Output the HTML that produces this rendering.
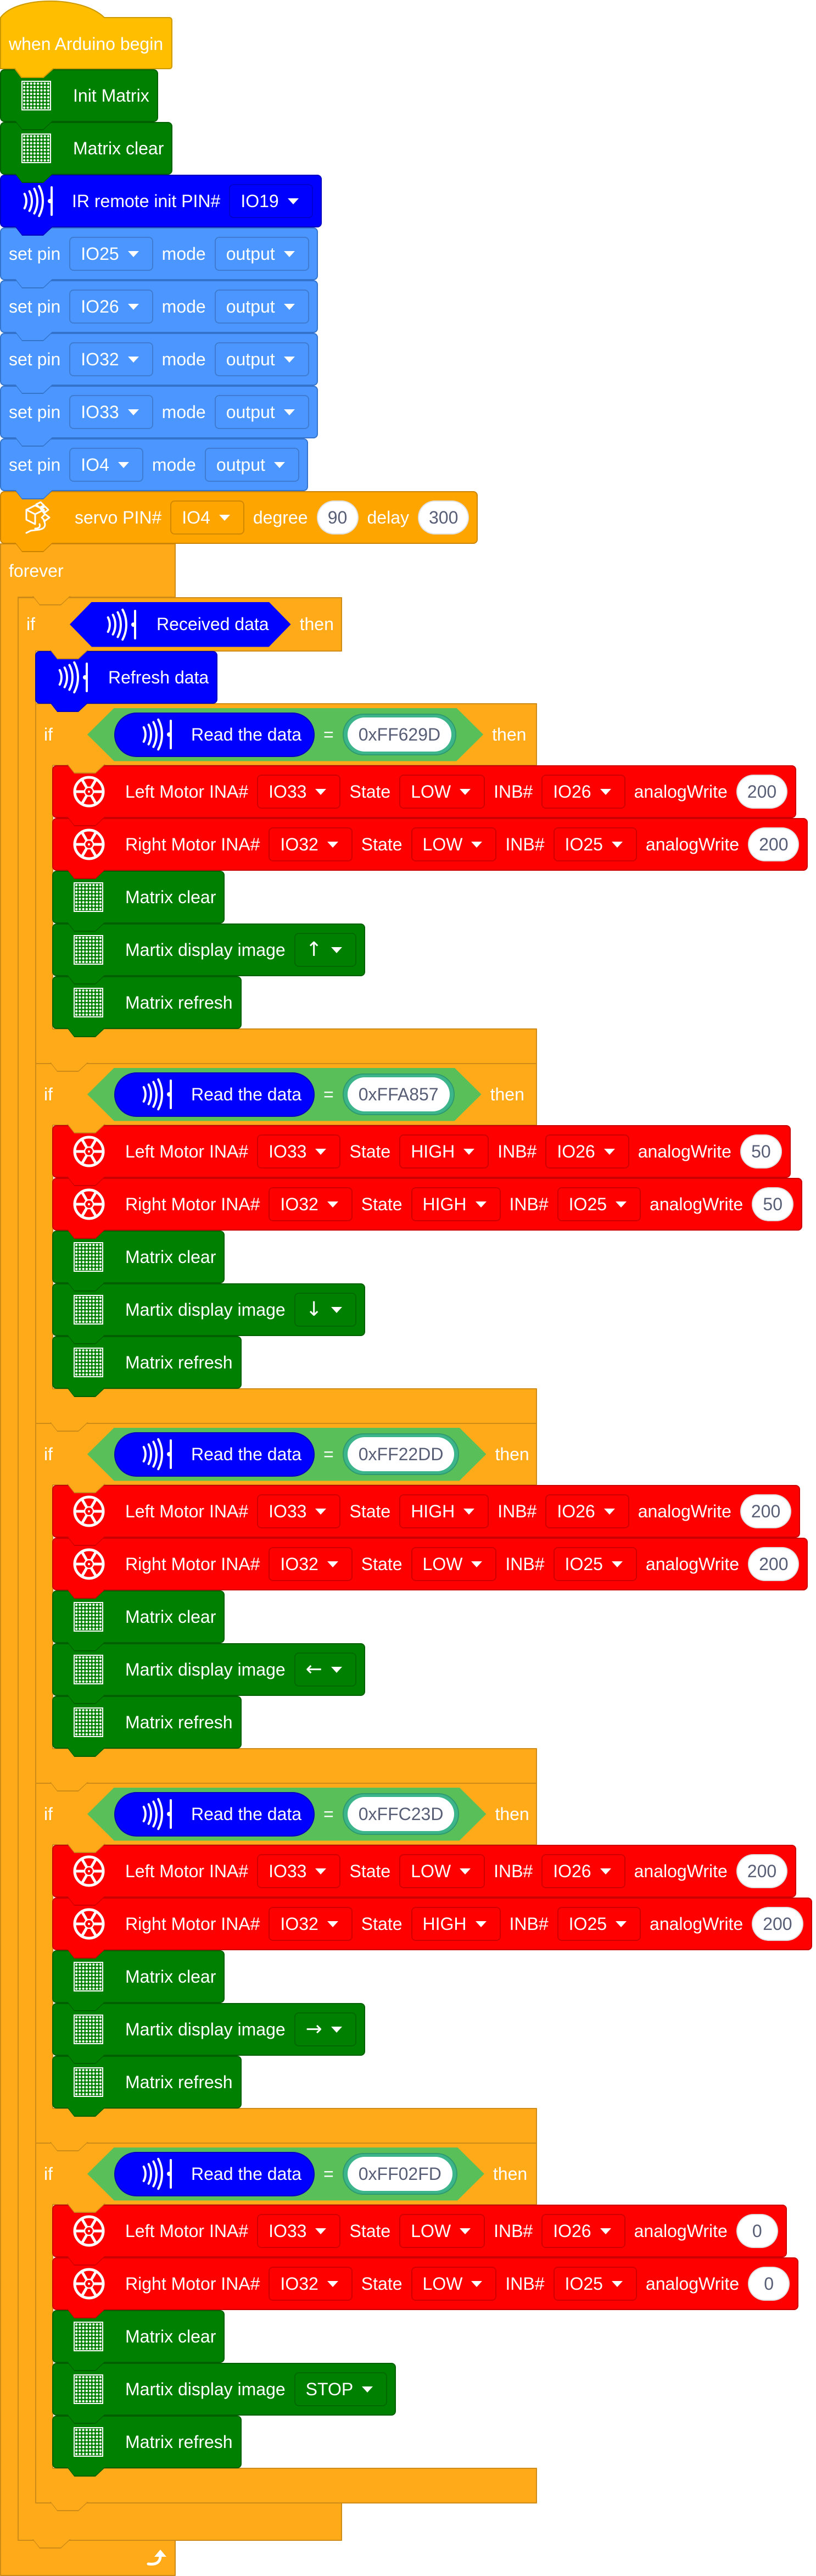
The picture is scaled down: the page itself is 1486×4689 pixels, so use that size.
<!DOCTYPE html>
<html><head><meta charset="utf-8">
<style>
html,body{margin:0;padding:0;background:#fff;}
body{width:1486px;height:4689px;position:relative;overflow:hidden;font-family:"Liberation Sans",Arial,"DejaVu Sans",sans-serif;}
.b{position:absolute;display:flex;align-items:center;gap:16px;height:96px;box-sizing:border-box;border:2px solid var(--d);background:var(--c);border-radius:8px;padding:0 14px;color:#fff;font-size:32px;white-space:nowrap;}
.t::before,.t::after{content:"";position:absolute;left:25px;width:70px;height:17px;clip-path:polygon(0 0,100% 0,74% 100%,19% 100%);z-index:5;}
.t::before{top:100%;background:var(--d);}
.t::after{top:calc(100% - 2px);background:var(--c);}
.g{--c:#008000;--d:#006000;}
.bl{--c:#0000FF;--d:#0000C0;}
.sp{--c:#4C97FF;--d:#3373CC;}
.rd{--c:#FF0000;--d:#CC0000;}
.sv{--c:#FFA500;--d:#CC8400;}
.dd{height:62px;box-sizing:border-box;border:2px solid rgba(0,0,0,.18);border-radius:8px;display:flex;align-items:center;padding:0 24px 0 19px;gap:16px;}
.ar{width:0;height:0;border-left:10px solid transparent;border-right:10px solid transparent;border-top:11px solid #fff;}
.ag{font-family:"DejaVu Sans",sans-serif;font-size:36px;line-height:1;}
.p{height:62px;min-width:76px;box-sizing:border-box;padding:0 18px;border-radius:31px;background:#fff;color:#575E75;display:flex;align-items:center;justify-content:center;border:2px solid rgba(0,0,0,.12);}
.mx{width:50px;height:50px;border:2px solid #fff;background:radial-gradient(circle,#fff 1.9px,transparent 2.4px) 0 0/6.25px 6.25px;flex:none;}
.mi{padding-left:37px;}
.mi .mx+span{margin-left:24px;}
.hd{position:absolute;display:flex;align-items:center;gap:16px;color:#fff;font-size:32px;white-space:nowrap;box-sizing:border-box;padding-left:16px;}
.hx{display:flex;align-items:center;gap:16px;height:97px;padding:0 49px;background:#59C059;margin-left:47px;clip-path:polygon(49px 0,calc(100% - 49px) 0,100% 50%,calc(100% - 49px) 100%,49px 100%,0 50%);}
.rp{height:81px;box-sizing:border-box;border-radius:41px;background:#0000FF;border:2px solid #0000C0;display:flex;align-items:center;padding:0 22px 0 40px;}
.rp span{margin-left:33px;}
.vr{padding:5px 7px;border-radius:40px;background:#3DB58A;border:2px solid #2E9A6F;}
.vi{height:62px;border-radius:31px;background:#fff;color:#575E75;padding:0 20px;display:flex;align-items:center;}
.hx2{display:flex;align-items:center;height:82px;padding:0 40px 0 58px;background:#0000FF;margin-left:47px;clip-path:polygon(40px 0,calc(100% - 40px) 0,100% 50%,calc(100% - 40px) 100%,40px 100%,0 50%);}
.hx2 span{margin-left:35px;}
.ot{position:absolute;width:70px;height:17px;background:#CF8B17;clip-path:polygon(0 0,100% 0,74% 100%,19% 100%);z-index:6;}
.ot::after{content:"";position:absolute;left:0;top:-2px;width:70px;height:17px;background:#FFAB19;clip-path:polygon(0 0,100% 0,74% 100%,19% 100%);}
.mt{padding-left:35px;}
.mt svg{flex:none;}
.mt svg+span{margin-left:20px;}
</style></head><body>

<svg width="0" height="0" style="position:absolute">
<defs>
<symbol id="ir" viewBox="0 0 65 62"><g fill="none" stroke="#fff" stroke-width="4" stroke-linecap="round">
<path d="M11.7,17.9 A28,28 0 0 1 11.7,44.1"/><path d="M20.6,13.2 A38,38 0 0 1 20.6,48.8"/><path d="M29.4,8.5 A48,48 0 0 1 29.4,53.5"/><path d="M38.2,3.8 A58,58 0 0 1 38.2,58.2"/><path d="M61,6 V56"/></g><circle cx="58" cy="31" r="4" fill="#fff"/></symbol>
<symbol id="wh" viewBox="0 0 60 60"><g fill="none" stroke="#fff"><circle cx="30" cy="30" r="26" stroke-width="5"/><circle cx="30" cy="30" r="8" stroke-width="2.5"/>
<path d="M38,30H56M4,30H22M34,23.1L43,7.5M26,36.9L17,52.5M26,23.1L17,7.5M34,36.9L43,52.5" stroke-width="5"/></g><circle cx="30" cy="30" r="2" fill="#fff"/></symbol>
</defs></svg>

<svg width="1486" height="4689" style="position:absolute;left:0;top:0" >
<g stroke="#CF8B17" stroke-width="2" stroke-linejoin="round" fill="#FFAB19">
<path d="M1,990 H319 V1087 H33 V4624 H319 V4688 H1 Z"/>
<path d="M33,1088 H622 V1185 H65 V4556 H622 V4624 H33 Z"/>
<path d="M65,1281 H977 V1393 H96 V1873 H977 V1936 H65 Z"/>
<path d="M65,1936 H977 V2048 H96 V2528 H977 V2591 H65 Z"/>
<path d="M65,2591 H977 V2703 H96 V3183 H977 V3246 H65 Z"/>
<path d="M65,3246 H977 V3358 H96 V3838 H977 V3901 H65 Z"/>
<path d="M65,3901 H977 V4013 H96 V4493 H977 V4556 H65 Z"/>
</g>
<g fill="none" stroke="#fff" stroke-width="5" stroke-linecap="round"><path d="M270,4667 Q292,4670 292,4652"/></g>
<path d="M281,4654 L292,4641 L303,4654 Z" fill="#fff"/>
<text x="16" y="1050" fill="#fff" font-size="32" font-family="Liberation Sans, Arial, sans-serif">forever</text>
</svg>

<svg width="330" height="150" style="position:absolute;left:0;top:0;z-index:6">
<path d="M1,125 L1,32 C30,-8 150,-8 190,32 L308,32 Q313,32 313,38 L313,120 Q313,125 308,125 L97,125 L79,141 L39,141 L27,125 Z" fill="#FFBF00" stroke="#CC9900" stroke-width="2"/>
<text x="16" y="91" fill="#fff" font-size="32" font-family="Liberation Sans, Arial, sans-serif">when Arduino begin</text>
</svg>

<div class="b g t mi" style="left:0;top:126px"><div class="mx"></div><span>Init Matrix</span></div>
<div class="b g t mi" style="left:0;top:222px"><div class="mx"></div><span>Matrix clear</span></div>
<div class="b bl t" style="left:0;top:318px;padding-left:31px"><svg width="65" height="62"><use href="#ir"/></svg><span style="margin-left:17px">IR remote init PIN#</span><div class="dd">IO19<i class="ar"></i></div></div>
<div class="b sp t" style="left:0;top:414px"><span>set pin</span><div class="dd">IO25<i class="ar"></i></div><span>mode</span><div class="dd">output<i class="ar"></i></div></div>
<div class="b sp t" style="left:0;top:510px"><span>set pin</span><div class="dd">IO26<i class="ar"></i></div><span>mode</span><div class="dd">output<i class="ar"></i></div></div>
<div class="b sp t" style="left:0;top:606px"><span>set pin</span><div class="dd">IO32<i class="ar"></i></div><span>mode</span><div class="dd">output<i class="ar"></i></div></div>
<div class="b sp t" style="left:0;top:702px"><span>set pin</span><div class="dd">IO33<i class="ar"></i></div><span>mode</span><div class="dd">output<i class="ar"></i></div></div>
<div class="b sp t" style="left:0;top:798px"><span>set pin</span><div class="dd">IO4<i class="ar"></i></div><span>mode</span><div class="dd">output<i class="ar"></i></div></div>
<div class="b sv t" style="left:0;top:894px;padding-left:42px"><svg width="48" height="60" viewBox="0 0 48 60"><g fill="none" stroke="#fff" stroke-width="3" stroke-linejoin="round" stroke-linecap="round"><path d="M4,16 L20,8 L36,16 L20,24 Z"/><path d="M4,16 V34 L20,42 V24"/><path d="M36,16 V22"/><path d="M22,6 L30,2 L36,8 L28,12 Z"/><path d="M30,14 L38,10 L44,16 L36,22 Z"/><path d="M38,24 L46,30 L38,36 L32,30 Z"/><path d="M36,36 C40,44 38,50 28,52 L12,54 L4,58"/><path d="M28,42 C30,48 26,50 20,50"/></g></svg><span style="margin-left:28px">servo PIN#</span><div class="dd">IO4<i class="ar"></i></div><span>degree</span><div class="p">90</div><span>delay</span><div class="p">300</div></div>

<div class="ot" style="left:59px;top:1085px"></div>
<div class="hd" style="left:32px;top:1088px;height:97px"><span>if</span><div class="hx2"><svg width="65" height="62"><use href="#ir"/></svg><span>Received data</span></div><span>then</span></div>
<div class="ot" style="left:91px;top:1183px"></div>
<div class="b bl t" style="left:64px;top:1185px;height:96px;padding-left:31px"><svg width="65" height="62"><use href="#ir"/></svg><span style="margin-left:19px">Refresh data</span></div>

<div class="hd" style="left:64px;top:1281px;height:112px"><span>if</span><div class="hx"><div class="rp"><svg width="65" height="62"><use href="#ir"/></svg><span>Read the data</span></div><span>=</span><div class="vr"><div class="vi">0xFF629D</div></div></div><span>then</span></div>
<div class="ot" style="left:122px;top:1391px"></div>
<div class="b rd t mt" style="left:95px;top:1393px"><svg width="60" height="60"><use href="#wh"/></svg><span>Left Motor INA#</span><div class="dd">IO33<i class="ar"></i></div><span>State</span><div class="dd">LOW<i class="ar"></i></div><span>INB#</span><div class="dd">IO26<i class="ar"></i></div><span>analogWrite</span><div class="p">200</div></div>
<div class="b rd t mt" style="left:95px;top:1489px"><svg width="60" height="60"><use href="#wh"/></svg><span>Right Motor INA#</span><div class="dd">IO32<i class="ar"></i></div><span>State</span><div class="dd">LOW<i class="ar"></i></div><span>INB#</span><div class="dd">IO25<i class="ar"></i></div><span>analogWrite</span><div class="p">200</div></div>
<div class="b g t mi" style="left:95px;top:1585px"><div class="mx"></div><span>Matrix clear</span></div>
<div class="b g t mi" style="left:95px;top:1681px"><div class="mx"></div><span>Martix display image</span><div class="dd"><span class="ag">↑</span><i class="ar"></i></div></div>
<div class="b g t mi" style="left:95px;top:1777px"><div class="mx"></div><span>Matrix refresh</span></div>
<div class="ot" style="left:91px;top:1934px"></div>

<div class="hd" style="left:64px;top:1936px;height:112px"><span>if</span><div class="hx"><div class="rp"><svg width="65" height="62"><use href="#ir"/></svg><span>Read the data</span></div><span>=</span><div class="vr"><div class="vi">0xFFA857</div></div></div><span>then</span></div>
<div class="ot" style="left:122px;top:2046px"></div>
<div class="b rd t mt" style="left:95px;top:2048px"><svg width="60" height="60"><use href="#wh"/></svg><span>Left Motor INA#</span><div class="dd">IO33<i class="ar"></i></div><span>State</span><div class="dd">HIGH<i class="ar"></i></div><span>INB#</span><div class="dd">IO26<i class="ar"></i></div><span>analogWrite</span><div class="p">50</div></div>
<div class="b rd t mt" style="left:95px;top:2144px"><svg width="60" height="60"><use href="#wh"/></svg><span>Right Motor INA#</span><div class="dd">IO32<i class="ar"></i></div><span>State</span><div class="dd">HIGH<i class="ar"></i></div><span>INB#</span><div class="dd">IO25<i class="ar"></i></div><span>analogWrite</span><div class="p">50</div></div>
<div class="b g t mi" style="left:95px;top:2240px"><div class="mx"></div><span>Matrix clear</span></div>
<div class="b g t mi" style="left:95px;top:2336px"><div class="mx"></div><span>Martix display image</span><div class="dd"><span class="ag">↓</span><i class="ar"></i></div></div>
<div class="b g t mi" style="left:95px;top:2432px"><div class="mx"></div><span>Matrix refresh</span></div>
<div class="ot" style="left:91px;top:2589px"></div>

<div class="hd" style="left:64px;top:2591px;height:112px"><span>if</span><div class="hx"><div class="rp"><svg width="65" height="62"><use href="#ir"/></svg><span>Read the data</span></div><span>=</span><div class="vr"><div class="vi">0xFF22DD</div></div></div><span>then</span></div>
<div class="ot" style="left:122px;top:2701px"></div>
<div class="b rd t mt" style="left:95px;top:2703px"><svg width="60" height="60"><use href="#wh"/></svg><span>Left Motor INA#</span><div class="dd">IO33<i class="ar"></i></div><span>State</span><div class="dd">HIGH<i class="ar"></i></div><span>INB#</span><div class="dd">IO26<i class="ar"></i></div><span>analogWrite</span><div class="p">200</div></div>
<div class="b rd t mt" style="left:95px;top:2799px"><svg width="60" height="60"><use href="#wh"/></svg><span>Right Motor INA#</span><div class="dd">IO32<i class="ar"></i></div><span>State</span><div class="dd">LOW<i class="ar"></i></div><span>INB#</span><div class="dd">IO25<i class="ar"></i></div><span>analogWrite</span><div class="p">200</div></div>
<div class="b g t mi" style="left:95px;top:2895px"><div class="mx"></div><span>Matrix clear</span></div>
<div class="b g t mi" style="left:95px;top:2991px"><div class="mx"></div><span>Martix display image</span><div class="dd"><span class="ag">←</span><i class="ar"></i></div></div>
<div class="b g t mi" style="left:95px;top:3087px"><div class="mx"></div><span>Matrix refresh</span></div>
<div class="ot" style="left:91px;top:3244px"></div>

<div class="hd" style="left:64px;top:3246px;height:112px"><span>if</span><div class="hx"><div class="rp"><svg width="65" height="62"><use href="#ir"/></svg><span>Read the data</span></div><span>=</span><div class="vr"><div class="vi">0xFFC23D</div></div></div><span>then</span></div>
<div class="ot" style="left:122px;top:3356px"></div>
<div class="b rd t mt" style="left:95px;top:3358px"><svg width="60" height="60"><use href="#wh"/></svg><span>Left Motor INA#</span><div class="dd">IO33<i class="ar"></i></div><span>State</span><div class="dd">LOW<i class="ar"></i></div><span>INB#</span><div class="dd">IO26<i class="ar"></i></div><span>analogWrite</span><div class="p">200</div></div>
<div class="b rd t mt" style="left:95px;top:3454px"><svg width="60" height="60"><use href="#wh"/></svg><span>Right Motor INA#</span><div class="dd">IO32<i class="ar"></i></div><span>State</span><div class="dd">HIGH<i class="ar"></i></div><span>INB#</span><div class="dd">IO25<i class="ar"></i></div><span>analogWrite</span><div class="p">200</div></div>
<div class="b g t mi" style="left:95px;top:3550px"><div class="mx"></div><span>Matrix clear</span></div>
<div class="b g t mi" style="left:95px;top:3646px"><div class="mx"></div><span>Martix display image</span><div class="dd"><span class="ag">→</span><i class="ar"></i></div></div>
<div class="b g t mi" style="left:95px;top:3742px"><div class="mx"></div><span>Matrix refresh</span></div>
<div class="ot" style="left:91px;top:3899px"></div>

<div class="hd" style="left:64px;top:3901px;height:112px"><span>if</span><div class="hx"><div class="rp"><svg width="65" height="62"><use href="#ir"/></svg><span>Read the data</span></div><span>=</span><div class="vr"><div class="vi">0xFF02FD</div></div></div><span>then</span></div>
<div class="ot" style="left:122px;top:4011px"></div>
<div class="b rd t mt" style="left:95px;top:4013px"><svg width="60" height="60"><use href="#wh"/></svg><span>Left Motor INA#</span><div class="dd">IO33<i class="ar"></i></div><span>State</span><div class="dd">LOW<i class="ar"></i></div><span>INB#</span><div class="dd">IO26<i class="ar"></i></div><span>analogWrite</span><div class="p">0</div></div>
<div class="b rd t mt" style="left:95px;top:4109px"><svg width="60" height="60"><use href="#wh"/></svg><span>Right Motor INA#</span><div class="dd">IO32<i class="ar"></i></div><span>State</span><div class="dd">LOW<i class="ar"></i></div><span>INB#</span><div class="dd">IO25<i class="ar"></i></div><span>analogWrite</span><div class="p">0</div></div>
<div class="b g t mi" style="left:95px;top:4205px"><div class="mx"></div><span>Matrix clear</span></div>
<div class="b g t mi" style="left:95px;top:4301px"><div class="mx"></div><span>Martix display image</span><div class="dd">STOP<i class="ar"></i></div></div>
<div class="b g t mi" style="left:95px;top:4397px"><div class="mx"></div><span>Matrix refresh</span></div>
<div class="ot" style="left:91px;top:4554px"></div>
<div class="ot" style="left:59px;top:4622px"></div>

</body></html>
